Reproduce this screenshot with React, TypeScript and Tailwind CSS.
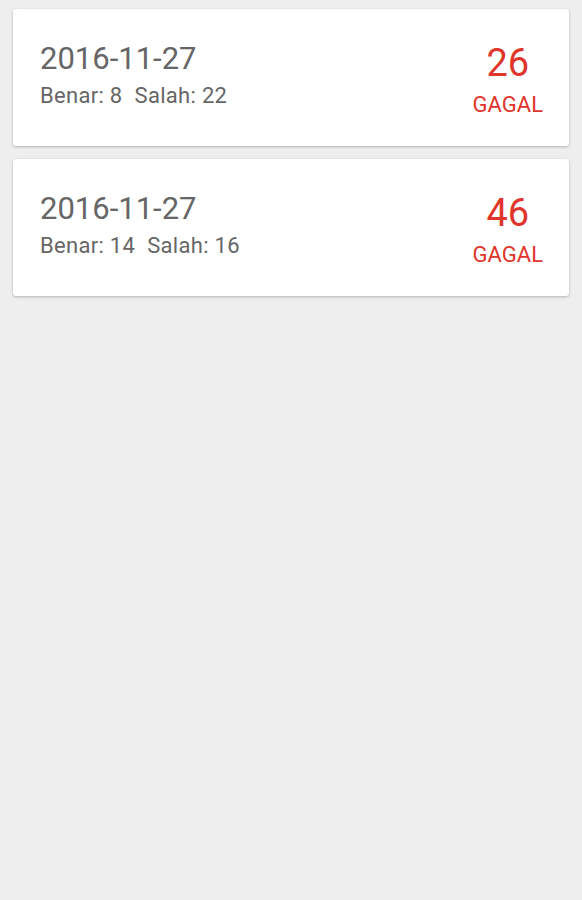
import React from "react";

const items = [
  { date: "2016-11-27", benar: 8, salah: 22, score: 26 },
  { date: "2016-11-27", benar: 14, salah: 16, score: 46 },
];

export default function App() {
  return (
    <div
      className="min-h-[900px] w-full bg-[#eeeeee] px-[13px] pt-[9px] flex flex-col gap-[13px]"
      style={{ fontFamily: "Roboto, 'Noto Sans', sans-serif" }}
    >
      {items.map((it, i) => (
        <div
          key={i}
          className="h-[137px] bg-white rounded-[3px] shadow-[0_1px_3px_rgba(0,0,0,0.25)] flex items-center justify-between pl-[27px] pr-[26px]"
        >
          <div className="flex flex-col text-[#666666] pb-[5px]">
            <div className="text-[31px] leading-[31px]">{it.date}</div>
            <div className="text-[22px] leading-[22px] tracking-[0.3px] mt-[11px] flex">
              <span>Benar: {it.benar}</span>
              <span className="ml-[12px]">Salah: {it.salah}</span>
            </div>
          </div>
          <div className="flex flex-col items-center text-[#e0352b] pt-[5px]">
            <div className="text-[38px] leading-[38px]">{it.score}</div>
            <div className="text-[22px] leading-[22px] mt-[12px]">GAGAL</div>
          </div>
        </div>
      ))}
    </div>
  );
}
